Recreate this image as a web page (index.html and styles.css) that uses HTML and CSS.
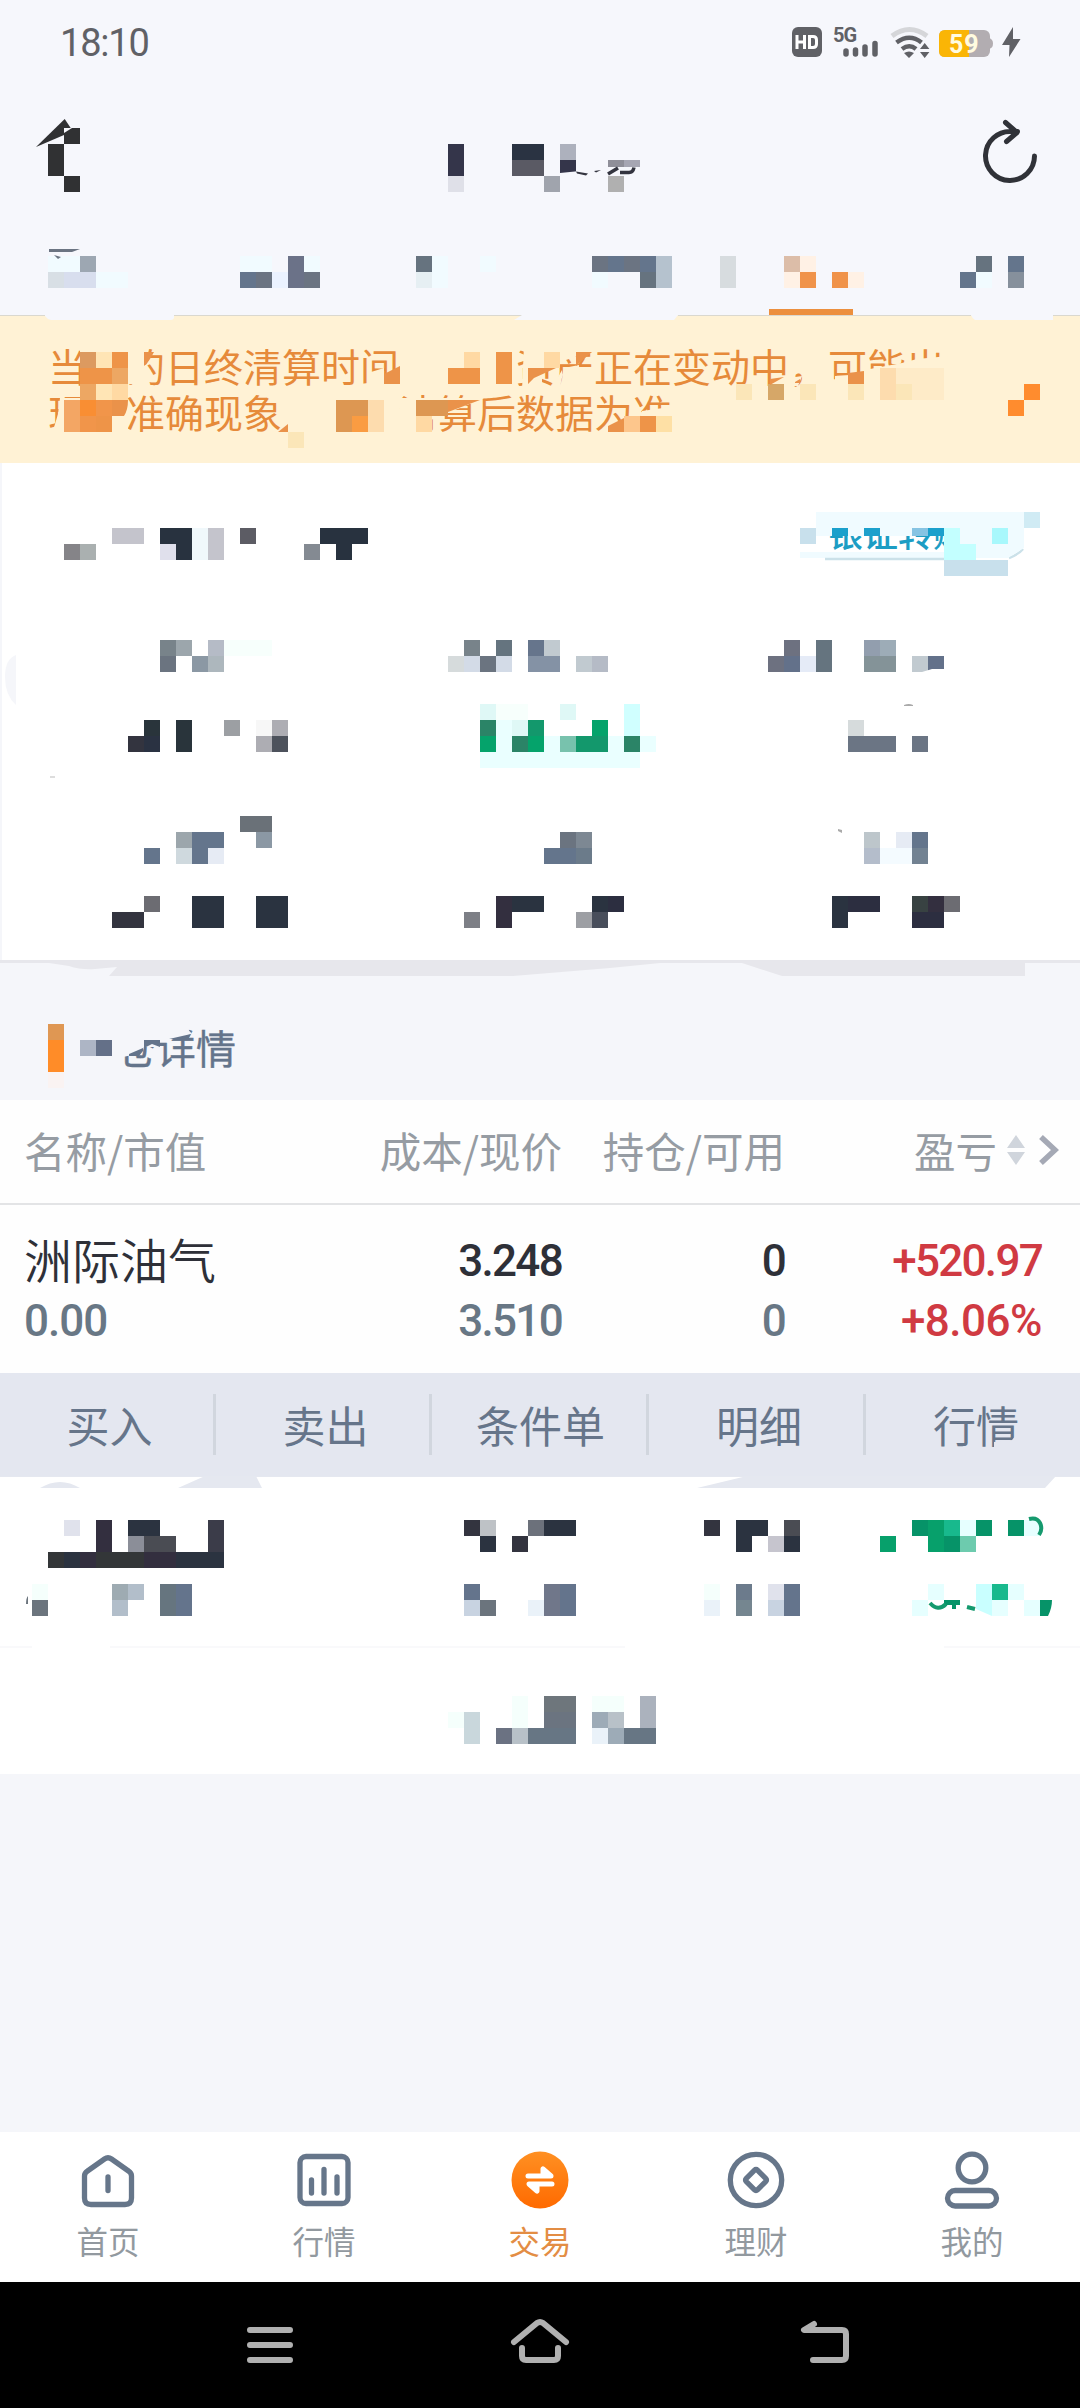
FILE: index.html
```html
<!DOCTYPE html>
<html lang="zh-CN">
<head>
<meta charset="utf-8">
<title>交易</title>
<link rel="stylesheet" href="styles.css">
</head>
<body>
<header class="top">
  <div class="status">
    <span class="clock">18:10</span>
    <svg class="status-icons" width="234" height="40" viewBox="791 21 234 40">
      <rect x="792" y="27" width="30" height="30" rx="6" fill="#606166"/>
      <path d="M797 35v14M804.500 35v14M797 42h7.500M809.500 36.500v11h3.500q3.500 0 3.500-3.500v-4q0-3.500-3.500-3.500z" fill="none" stroke="#fff" stroke-width="3"/>
      <text x="833" y="42" class="net">5G</text>
      <path d="M846 51v3M855.500 50v4M865 47v7M875 43.500v10.500" stroke="#606166" stroke-width="5.500" stroke-linecap="round"/>
      <path d="M892 36q17.500-13 35 0" fill="none" stroke="#d5d6d9" stroke-width="5"/>
      <path d="M896.500 42.500q13-9.500 25 0M902 49q7.500-5.500 14 0" fill="none" stroke="#606166" stroke-width="4.500"/>
      <path d="M904 53q5-3 10 0l-5 5zM920 49l4.700-6 4.700 6zM920 52h9.400l-4.700 6z" fill="#606166"/>
      <rect x="939" y="30" width="51" height="27" rx="6" fill="#b2adb1"/>
      <path d="M989 38q4 1 4 5.500t-4 5.500z" fill="#b2adb1"/>
      <path d="M969 30h-24q-6 0-6 6v15q0 6 6 6h24z" fill="#fab505"/>
      <text x="949" y="53" class="battery">59</text>
      <path d="M1013 27l-11 18h7.500l-.500 12 11.500-18h-7.500z" fill="#606166"/>
    </svg>
  </div>
  <div class="titlebar">
    <svg width="62" height="70" viewBox="980 115 62 70">
      <path d="M1034.500 156a24.500 24.500 0 1 1-23-24.500h6M1005.500 122.500l11.500 10-10.500 9" fill="none" stroke="#303238" stroke-width="5" stroke-linecap="round" stroke-linejoin="round"/>
    </svg>
  </div>
  <div class="tabs"><span class="tab-line"></span></div>
  <svg class="overlay" viewBox="0 0 1080 322" height="322">
    <path d="M0 315.500h45M174 315.500h348M678 315.500h293M1053 315.500h27" stroke="#dad8cf"/>
    <path d="M45 314h129v4q-1 2-3 2h-120q-4-1-6-4zM522 315l-8 5h160l4-5zM971 314h82v6h-78q-3-2-4-5z" fill="#f6f7fc"/>
    <g class="px" transform="scale(16) translate(0 .5)">
      <path stroke="#303133" d="M4 8h1M3 9h1M3 10h1M4 11h1"/>
      <path stroke="#34354a" d="M28 9h1M28 10h1M35 10h1"/>
      <path stroke="#dfe0e8" d="M28 11h1"/>
      <path stroke="#2a3342" d="M32 9h2"/><path stroke="#5a5a64" d="M32 10h2"/>
      <path stroke="#a0a4ad" d="M34 11h1"/><path stroke="#adb1bd" d="M35 9h1"/><path stroke="#b0b0b0" d="M38 11h1"/>
      <path stroke="#f1fbff" d="M3 16h2M6 17h2M15 16h2M19 16h1M27 16h1M27 17h1M30 16h1M37 17h1M61 17h1"/>
      <path stroke="#9da7b2" d="M5 16h1"/><path stroke="#d8dfe5" d="M3 17h1"/><path stroke="#d8deee" d="M4 17h2"/>
      <path stroke="#64758c" d="M15 17h1M38 16h1M40 16h1M60 17h1M63 16h1"/>
      <path stroke="#6b7482" d="M16 17h1M19 17h1M37 16h1M39 16h1"/>
      <path stroke="#6b7288" d="M18 16h1M18 17h1"/><path stroke="#ebf2ff" d="M17 17h1"/>
      <path stroke="#66737f" d="M26 16h1M40 17h1M61 16h1"/><path stroke="#e6eff3" d="M26 17h1"/>
      <path stroke="#b5c2ce" d="M41 16h1M41 17h1"/><path stroke="#d7dcdf" d="M45 16h1M45 17h1"/>
      <path stroke="#dcbda8" d="M49 16h1"/><path stroke="#fff1e5" d="M50 16h1M49 17h1M53 17h1"/>
      <path stroke="#f0934a" d="M50 17h1M52 17h1"/><path stroke="#86909c" d="M63 17h1"/>
    </g>
    <path d="M36 147l28.700-28 6 9-6.700 7z" fill="#303133"/>
    <path d="M64 128h8l-8 5z" fill="#f6f7fc"/>
    <path d="M608 160h16v7h-16z" fill="#8f8f99"/><path d="M624 160h16v7h-16z" fill="#a6a6b3"/>
    <path d="M560 173l30-3v7h-30z" fill="#f6f7fc"/>
    <path d="M576 171.500l12 2-2 2-9-2zM594 171l7-1-5 2.500z" fill="#33343f"/>
    <path d="M608 174l10-6M620 172.500h9q4 0 5-5" fill="none" stroke="#33343f" stroke-width="3.500"/>
    <path d="M49 249h31l-8 3h-23zM54 255l7 2-3 2z" fill="#6b7482"/>
  </svg>
</header>

<section class="notice">
  <p>当　的日终清算时间　　　资产正在变动中，可能出</p>
  <p>现　准确现象　　　清算后数据为准</p>
  <svg class="overlay" viewBox="0 315 1080 148" height="148">
    <path fill="#fff2d5" d="M80 345h64v39h-64zM60 398h68v36h-76l6-20zM371 372l13-4v20h-24v-4l8-1zM524 345h72v5l-60 20 6 8v12h-20zM562 370l-10 18h12zM564 368l15-3 1 20-20 2zM776 380l26-4-4 10h-30zM835 376l30-2 5-5 32-6 15-4 32-3v34h-114zM400 398h84l-53 22-3 16h-28zM608 436l12-12 20-8 2-5 28-4v30zM384 384l16-16v20h-16z"/>
    <g class="px" transform="scale(16) translate(0 .5)">
      <path stroke="#dc9a60" d="M5 22h1"/><path stroke="#ffe5b5" d="M6 22h1M6 24h1"/>
      <path stroke="#ee9448" d="M7 22h1M5 23h2M6 26h1M28 23h2M31 22h1M31 23h1M40 26h1"/>
      <path stroke="#eda763" d="M7 23h1M5 24h1"/><path stroke="#ffd9a3" d="M7 24h1M29 22h1M34 22h1M26 26h1"/>
      <path stroke="#f3a664" d="M4 25h1M4 26h1"/><path stroke="#f98e33" d="M5 25h1"/><path stroke="#f1954a" d="M5 26h1M6 25h1"/>
      <path stroke="#d6a768" d="M48 24h1"/><path stroke="#fbe6b8" d="M46 24h1M50 24h1M53 24h1M56 24h1M18 27h1"/>
      <path stroke="#fddcae" d="M55 23h1M55 24h1M23 25h1M23 26h1"/><path stroke="#feebc8" d="M56 23h3M57 24h2"/>
      <path stroke="#ff8c2e" d="M64 24h1M63 25h1"/>
      <path stroke="#dd9752" d="M21 25h2M21 26h1M26 25h2"/><path stroke="#fa9c42" d="M22 26h1"/>
      <path stroke="#fdc68c" d="M39 26h1"/><path stroke="#fee0a5" d="M41 26h1"/>
    </g>
    <path fill="#ea924a" d="M144 352h10q-5 10-10 14zM384 374l16-8v18h-16zM112 400h16q0 10-4 16h-12zM448 400h32l-32 12zM528 368h28l-22 10-6 6zM576 352h16l-16 14zM848 373l16-2v13h-16zM278 432l10-8v8zM608 432v-6l16-8v14zM770 385l0-6 14-2zM795 382l5-3v4h-5z"/>
  </svg>
</section>

<section class="account">
  <div class="account-head"><span class="transfer">银证转账</span></div>
  <svg class="overlay" viewBox="0 463 1080 516" height="516">
    <path fill="#e7e7ec" d="M0 960h1080v3h-55v13h-243l-40-13h-82l-50 5-97 8h-404l8-9-22 2q-14 1-26-3l-20-3h-49z"/>
    <path fill="#f5f6fa" d="M16 655v50q-11-10-11-28t11-22zM0 463h2v497h-2z"/>
    <path fill="#f0fbff" d="M816 512h184v24h-184zM1000 512h24v24h-24zM800 552h144v6h-144z"/>
    <path d="M825 559h119M1009 558q10-4 14-9" fill="none" stroke="#cbe1e9" stroke-width="2.500"/>
    <path fill="#f0fbff" d="M944 528h80v20l-16 10h-64z"/>
    <path fill="#1ba0cc" d="M832 528h16v8h-16zM864 528h16v8h-16zM928 528h16v8h-16z"/><path fill="#86c4e3" d="M912 528h16v8h-16z"/>
    <g class="px" transform="scale(16) translate(0 .5)">
      <path stroke="#c8e0ec" d="M50 33h1M59 35h4"/><path stroke="#d0ebf4" d="M64 32h1"/><path stroke="#c3ffff" d="M59 33h1M59 34h2"/><path stroke="#a8f8fc" d="M62 33h1"/>
      <path stroke="#858488" d="M4 34h1"/><path stroke="#aab0b0" d="M5 34h1"/><path stroke="#c4c4cc" d="M7 33h2M13 33h1M13 34h1"/>
      <path stroke="#28323f" d="M10 33h2M11 34h1M20 33h3M21 34h1"/><path stroke="#e0e0ec" d="M10 34h1"/><path stroke="#f0f8fb" d="M12 33h1M12 34h1"/>
      <path stroke="#5c5c64" d="M15 33h1"/><path stroke="#848a92" d="M19 34h1"/>
      <path stroke="#78838a" d="M10 40h1M29 40h1"/><path stroke="#9ca6ac" d="M11 40h1M11 52h1"/><path stroke="#b5bbc6" d="M13 40h1M37 41h1"/><path stroke="#f7fffc" d="M14 40h3M31 44h2"/>
      <path stroke="#6b7480" d="M10 41h1M30 41h1M35 52h1"/><path stroke="#8b98a4" d="M12 41h1M16 52h1"/><path stroke="#adb7bd" d="M13 41h1"/>
      <path stroke="#d6dbdc" d="M28 41h1M53 45h1"/><path stroke="#d3dbe7" d="M29 41h1M31 41h1"/><path stroke="#65747f" d="M31 40h1M51 40h1M51 41h1"/>
      <path stroke="#66758c" d="M33 40h1"/><path stroke="#8492a5" d="M33 41h2"/><path stroke="#c1cad0" d="M34 40h1M36 41h1M57 41h1"/>
      <path stroke="#6d7180" d="M49 40h1M48 41h1"/><path stroke="#63718a" d="M49 41h1M58 41h1"/><path stroke="#e5ebf7" d="M50 41h1"/>
      <path stroke="#929eae" d="M54 40h1"/><path stroke="#9dacb7" d="M55 40h1"/><path stroke="#849398" d="M54 41h2"/>
      <path stroke="#33343f" d="M8 46h1M7 57h2"/><path stroke="#29343b" d="M9 45h1M11 45h1M11 46h1"/><path stroke="#2a3242" d="M9 46h1"/>
      <path stroke="#9c9fa3" d="M14 45h1"/><path stroke="#f7f7f7" d="M16 45h1"/><path stroke="#adadb3" d="M16 46h1M17 45h1"/><path stroke="#4d525c" d="M17 46h1"/>
      <path stroke="#dff8f6" d="M30 44h1M35 44h1M32 45h1"/><path stroke="#2b8467" d="M30 45h1M32 46h1M39 46h1"/><path stroke="#eaffff" d="M31 45h1M31 46h1M30 47h10M34 46h1M40 46h1M38 46h1"/>
      <path stroke="#05a36b" d="M30 46h1M33 46h1M37 45h1"/><path stroke="#13986c" d="M33 45h1M36 46h1M37 46h1"/><path stroke="#78c2ad" d="M35 46h1"/><path stroke="#d0ffff" d="M39 44h1M39 45h1"/>
      <path stroke="#6b7584" d="M53 46h3M57 46h1"/>
      <path stroke="#6a7178" d="M15 51h2"/><path stroke="#64758c" d="M12 52h2M12 53h1M9 53h1M34 53h2M57 52h1"/><path stroke="#cfd9de" d="M11 53h1"/><path stroke="#e6ebf4" d="M13 53h1M56 52h1"/>
      <path stroke="#7d8893" d="M36 52h1"/><path stroke="#6b7b8a" d="M36 53h1"/><path stroke="#bdc6cb" d="M54 52h1"/><path stroke="#b4bdcb" d="M54 53h1"/><path stroke="#f4fbff" d="M55 53h2"/><path stroke="#728292" d="M57 53h1"/>
      <path stroke="#6c6c72" d="M9 56h1M59 56h1"/><path stroke="#2a3340" d="M12 56h2M12 57h2M16 56h2M16 57h2M32 56h2M37 56h1M52 56h1M52 57h1"/>
      <path stroke="#7d7f86" d="M29 57h1"/><path stroke="#332f3f" d="M31 56h1M31 57h1M58 56h1"/><path stroke="#9d9fa4" d="M36 57h1"/><path stroke="#484e5b" d="M37 57h1"/>
      <path stroke="#2c2e40" d="M38 56h1M53 56h2M57 57h2"/><path stroke="#384242" d="M57 56h1"/>
    </g>
    <path fill="#fff" d="M922 672l10-3h12v3z"/>
    <path fill="#aaa" d="M904 705q5-2 9 0v1h-9zM838 829l4 1v3l-4-2z"/><path fill="#ddd" d="M50 776h5v2h-5z"/>
  </svg>
</section>

<section class="detail-title">
  <h2>仓详情</h2>
  <svg class="overlay" viewBox="0 979 1080 121" height="121">
    <path fill="#f5f6fa" d="M112 1024h50l24 3 6 7-22 6-10 1-4 6h-12l-2 6-24 5h-6z"/>
    <g class="px" transform="scale(16) translate(0 .5)">
      <path stroke="#df9753" d="M3 64h1"/><path stroke="#ff8c28" d="M3 65h1M3 66h1"/><path stroke="#faf3f2" d="M3 67h1"/>
      <path stroke="#adb5c5" d="M5 65h1"/><path stroke="#647088" d="M6 65h1"/>
    </g>
    <path fill="#64748b" d="M144 1040h16v7l-8-3-8 4zM129 1054l14-6v3l-4 5h-10zM169 1039l22-5-3 5z"/>
  </svg>
</section>

<main class="table">
  <div class="row head">
    <span>名称/市值</span><span>成本/现价</span><span>持仓/可用</span>
    <span class="sort">盈亏
      <svg width="52" height="32" viewBox="1008 1136 52 32"><path fill="#d0d5dc" d="M1008 1150l9-13 9 13zM1008 1154h18l-9 13z"/><path d="M1042 1139l14 13-14 13" fill="none" stroke="#a5a9b5" stroke-width="5.500"/></svg>
    </span>
  </div>
  <div class="row stock">
    <span class="name">洲际油气</span><span class="num">3.248</span><span class="num">0</span><span class="num up">+520.97</span>
    <span class="num sub worth">0.00</span><span class="num sub">3.510</span><span class="num sub">0</span><span class="num up pct">+8.06%</span>
  </div>
  <div class="actions"><span>买入</span><span>卖出</span><span>条件单</span><span>明细</span><span>行情</span>
    <svg class="overlay" viewBox="0 1373 1080 103" height="103"><path fill="#e4e7f0" d="M994 1449v-7l18-2 10-12v24h-28z"/></svg>
  </div>
  <div class="masked">
    <svg viewBox="0 1476 1080 298" height="298">
      <path fill="#e5e8f0" d="M178 1488l27-12h51l6 12zM697 1488l50-12h309l-11 12zM40 1488q20-12 40 0zM0 1476h1080v1h-1080z"/>
      <path d="M0 1647h32M110 1647h515M944 1647h136" stroke="#f9f9fb" stroke-width="2"/>
      <g class="px" transform="scale(16) translate(0 .5)">
        <path stroke="#e0e2ec" d="M4 95h1M48 99h1"/><path stroke="#332f3f" d="M6 95h1M6 96h1M5 97h1M9 97h2"/><path stroke="#2b3340" d="M8 95h2M4 97h1M11 97h3M46 95h1M46 96h1M47 95h1M34 95h2M30 96h1M49 96h1"/>
        <path stroke="#8b8e98" d="M8 96h1"/><path stroke="#4a4c53" d="M9 96h2M49 95h1"/><path stroke="#3b3c49" d="M13 95h1M13 96h1"/><path stroke="#333638" d="M3 97h1M6 97h3"/>
        <path stroke="#33343f" d="M29 95h1M32 96h1M44 95h1"/><path stroke="#bec2c6" d="M30 95h1"/><path stroke="#6c717b" d="M33 95h1"/><path stroke="#c6c5ce" d="M48 96h1"/>
        <path stroke="#f5fffc" d="M2 99h1M44 99h1M32 106h1M32 107h1M37 106h2M28 107h1"/><path stroke="#6b747d" d="M2 100h1M30 100h1"/><path stroke="#9eabb2" d="M7 99h1"/><path stroke="#b2beca" d="M8 99h1M7 100h1"/>
        <path stroke="#66757f" d="M10 99h1M10 100h1"/><path stroke="#64748c" d="M11 99h1M11 100h1M29 99h1M35 99h1M35 100h1M49 99h1M49 100h1"/><path stroke="#c8d3e1" d="M29 100h1M48 100h1"/>
        <path stroke="#eaf2f9" d="M33 100h1M44 100h1M37 108h1"/><path stroke="#70778a" d="M34 99h1M34 100h1"/><path stroke="#6c7b8c" d="M46 99h1"/><path stroke="#758690" d="M46 100h1"/>
        <path stroke="#07a06b" d="M55 96h1M58 95h1M58 96h1"/><path stroke="#069368" d="M57 95h1M59 96h1M61 95h1M63 95h1"/><path stroke="#18b98d" d="M59 95h1M62 99h1"/><path stroke="#e6ffff" d="M60 95h1M64 95h1M58 99h1M63 99h1M57 100h1M62 100h1M64 100h1"/><path stroke="#6dcbae" d="M60 96h1"/><path stroke="#c9ffff" d="M61 99h1M61 100h1"/>
        <path stroke="#6e767c" d="M34 106h2"/><path stroke="#abb2bd" d="M40 106h1M40 107h1"/><path stroke="#c9d7dc" d="M29 107h1M29 108h1"/><path stroke="#6b7480" d="M34 107h2"/><path stroke="#9dabb7" d="M37 107h1M38 108h1"/><path stroke="#b8c1c8" d="M38 107h1M32 108h1"/>
        <path stroke="#6b7282" d="M31 108h1"/><path stroke="#677684" d="M33 108h3M39 108h2"/>
      </g>
      <path fill="#fff" d="M976 1609l16 7h-20z"/>
      <path fill="#069368" d="M1040 1600h12q0 8-4 16h-8zM944 1600h16v5h-4v4h-4v-4h-8z"/>
      <path d="M1029 1519q8-2 11 4t-1 12M930 1603q8 9 16 1M967 1607l8 2" fill="none" stroke="#159a6e" stroke-width="4"/>
      <path d="M26 1604q0-6 2-8v8z" fill="#6b747d"/>
    </svg>
  </div>
</main>

<footer>
  <nav class="tabbar">
    <a><svg viewBox="78 2150 60 60"><path d="M84.500 2176q0-3 3-5l17-12q3.500-2.500 7 0l17 12q3 2 3 5v22q0 6.500-6.500 6.500h-34q-6.500 0-6.500-6.500zM108 2177v13.500"/></svg>首页</a>
    <a><svg viewBox="294 2150 60 60"><rect x="300" y="2156.500" width="48" height="47" rx="6"/><path d="M311.500 2180v13M324 2169.500v23.500M337 2177v16"/></svg>行情</a>
    <a class="active"><svg viewBox="510 2150 60 60"><defs><linearGradient id="og" x1="0" y1="0" x2="0" y2="1"><stop offset="0" stop-color="#ff9022"/><stop offset="1" stop-color="#ff6a00"/></linearGradient></defs><circle cx="540" cy="2180" r="28.500" fill="url(#og)" stroke="none"/><path class="swap" d="M528 2176h23l-8-7v6M552 2184h-23l8 7v-6"/></svg>交易</a>
    <a><svg viewBox="726 2150 60 60"><circle cx="756" cy="2180" r="25.700"/><rect x="748" y="2172" width="16" height="16" rx="2" transform="rotate(45 756 2180)"/></svg>理财</a>
    <a><svg viewBox="942 2150 60 60"><circle cx="972" cy="2168" r="13.800"/><rect x="947.500" y="2190.500" width="49" height="15.500" rx="7.700"/></svg>我的</a>
  </nav>
  <div class="sysnav">
    <svg viewBox="240 2315 60 60"><path d="M250 2330h40M250 2345h40M250 2360h40"/></svg>
    <svg viewBox="510 2315 60 60"><path d="M514 2342l23-19q3-2 6 0l23 19M522 2348v8q0 4 4 4h28q4 0 4-4v-8"/></svg>
    <svg class="back" viewBox="780 2315 72 60"><path d="M814 2324l-10 6h38q4 0 4 4v22q0 4-4 4h-29"/></svg>
  </div>
</footer>
</body>
</html>
```
FILE: styles.css
```css
* { box-sizing: border-box; }
body {
  margin: 0;
  width: 1080px;
  height: 2408px;
  display: flex;
  flex-direction: column;
  background: #f5f6fa;
  font-family: "Noto Sans CJK SC", sans-serif;
  overflow: hidden;
}
svg { display: block; }
section, header, .actions { position: relative; }
.overlay { position: absolute; left: 0; top: 0; width: 1080px; z-index: 1; }
.px { fill: none; stroke-width: 1; shape-rendering: crispEdges; }

.top { height: 315px; background: #f6f7fc; }
.top .overlay { z-index: 2; }
.status { height: 82px; padding: 0 55px 0 60px; display: flex; justify-content: space-between; align-items: center; }
.clock { padding-top: 3px; font: 400 38px/1 Roboto, sans-serif; letter-spacing: -1.200px; color: #606166; }
.net { font: 700 20px Roboto, sans-serif; letter-spacing: -1px; fill: #606166; }
.battery { font: 700 25px Roboto, sans-serif; letter-spacing: 1px; fill: #fffbe0; }
.titlebar { height: 140px; padding: 33px 38px 0 0; display: flex; justify-content: flex-end; }
.tabs { height: 93px; display: flex; align-items: flex-end; padding-left: 769px; }
.tab-line { width: 84px; height: 6px; background: #ec8f3e; }

.notice { height: 148px; background: #fff2d5; padding: 27px 0 0 48px; }
.notice p { margin: 0; font-size: 39px; line-height: 46px; color: #e68a3a; white-space: nowrap; text-spacing-trim: space-all; }

.account { height: 497px; background: #fff; }
.account-head { display: flex; padding: 42px 0 0 828px; }
.transfer { height: 53px; white-space: nowrap; font-size: 35px; line-height: 53px; font-weight: 500; color: #1c9dc4; }

.detail-title { height: 140px; padding: 57px 0 0 116px; }
.detail-title h2 { margin: 0; font-size: 40px; line-height: 60px; font-weight: 400; color: #64748b; -webkit-text-stroke: 0.400px #64748b; }
.detail-title .overlay { top: 19px; }

.table { background: #fefefe; }
.row { display: grid; grid-template-columns: 304px 234px 223px 1fr; padding: 0 21px 0 24px; text-align: right; }
.row > span:nth-child(4n+1) { text-align: left; }
.head { height: 105px; padding-bottom: 3px; align-items: center; font-size: 41.500px; color: #969ca3; border-bottom: 2px solid #e3e4e6; }
.sort { display: flex; justify-content: flex-end; align-items: center; gap: 10px; }
.stock { height: 168px; grid-template-rows: 60px 60px; padding-top: 26px; padding-right: 38px; align-items: center; }
.name { margin-top: -6px; font-size: 48px; line-height: 60px; font-weight: 350; color: #2e3038; }
.num { font: 500 44px/60px Roboto, sans-serif; letter-spacing: -1.700px; color: #2e3038; }
.sub { color: #687785; }
.worth { letter-spacing: -1px; }
.up { color: #d03a42; }
.pct { letter-spacing: -0.500px; }

.actions { height: 103px; background: #e4e7f0; display: grid; grid-template-columns: 216px 216px 217px 217px 214px; align-items: center; text-align: center; font-size: 43px; color: #66758a; }
.actions span { height: 61px; line-height: 60px; padding-left: 6px; border-right: 3px solid #d1d6de; }
.actions span:nth-of-type(3) { padding-left: 3px; }
.actions span:nth-of-type(5) { border: 0; padding-left: 6px; }
.masked { height: 298px; background: #fff; }
.masked svg { width: 1080px; }

footer { margin-top: auto; }
.tabbar { height: 150px; background: #fff; display: grid; grid-template-columns: repeat(5, 1fr); }
.tabbar a { display: flex; flex-direction: column; align-items: center; padding-top: 18px; font-size: 31.500px; line-height: 60px; color: #92999f; }
.tabbar svg { width: 60px; height: 60px; fill: none; stroke: #66768a; stroke-width: 5.300; stroke-linecap: round; stroke-linejoin: round; }
.tabbar .active { color: #e38d44; }
.tabbar .swap { stroke: #fff; stroke-width: 5; }
.sysnav { height: 126px; background: #000; display: flex; gap: 210px; padding: 33px 0 0 240px; }
.sysnav svg { width: 60px; height: 60px; fill: none; stroke: #b0b0b0; stroke-width: 6; stroke-linecap: round; stroke-linejoin: round; }
.sysnav .back { width: 72px; }
```
